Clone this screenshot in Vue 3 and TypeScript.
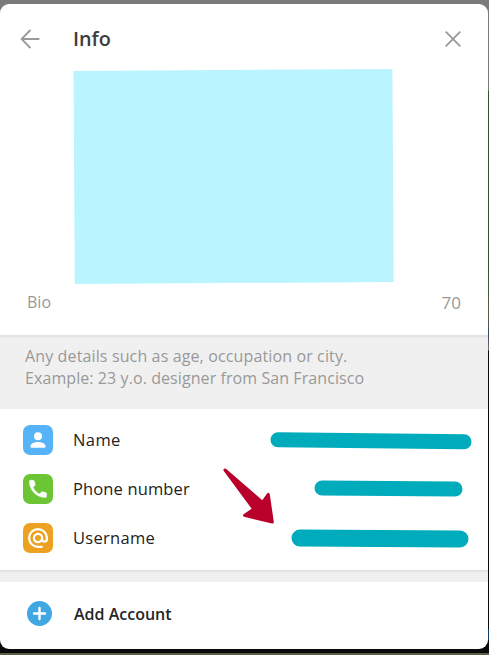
<script setup lang="ts">
interface Row {
  id: string
  label: string
  color: string
  bar: { x1: number; y1: number; x2: number; y2: number; w: number }
}

const rows: Row[] = [
  { id: 'name', label: 'Name', color: '#56b3f5', bar: { x1: 28, y1: 23.8, x2: 214, y2: 25.8, w: 15 } },
  { id: 'phone', label: 'Phone number', color: '#6cc534', bar: { x1: 72, y1: 23, x2: 205, y2: 24.1, w: 15 } },
  { id: 'username', label: 'Username', color: '#eda120', bar: { x1: 50, y1: 24, x2: 210, y2: 25, w: 17 } },
]
</script>

<template>
  <div class="backdrop">
    <div class="edge"></div>
    <main class="card">
      <header class="header">
        <svg class="back" width="20" height="20" viewBox="0 0 20 20">
          <path d="M10.4 1 L1.6 10 L10.4 19 M1.6 10 H19.4" />
        </svg>
        <h1 class="title">Info</h1>
        <svg class="close" width="16" height="16" viewBox="0 0 16 16">
          <path d="M0.7 0.7 L15.3 15.3 M15.3 0.7 L0.7 15.3" />
        </svg>
      </header>

      <svg class="photo" width="488" height="215" viewBox="0 0 488 215">
        <polygon points="73.5,2 392.4,0 393.7,213 74.8,215" />
      </svg>

      <div class="bio">
        <span class="bio-label">Bio</span>
        <span class="bio-count">70</span>
      </div>

      <div class="hint">
        <p class="hint-first">Any details such as age, occupation or city.</p>
        <p class="hint-second">Example: 23 y.o. designer from San Francisco</p>
      </div>

      <section class="rows">
        <div v-for="row in rows" :key="row.id" class="row">
          <svg class="icon" width="30" height="30" viewBox="0 0 30 30">
            <rect width="30" height="30" rx="7" :fill="row.color" />
            <g v-if="row.id === 'name'" fill="#fff">
              <circle cx="15" cy="11.2" r="4" />
              <path d="M7.5 21.2 C7.5 18 12 16.9 15 16.9 S22.5 18 22.5 21.2 Q22.5 22.7 21.2 22.7 H8.8 Q7.5 22.7 7.5 21.2 Z" />
            </g>
            <path
              v-else-if="row.id === 'phone'"
              fill="#fff"
              stroke="#fff"
              stroke-width="0.5"
              transform="translate(3 3)"
              d="M7 10.4 C8.4 13.3 10.7 15.6 13.6 17 L15.5 15 C15.8 14.7 16.2 14.6 16.6 14.8 L19.8 15.6 C20.3 15.8 20.6 16.2 20.6 16.7 V19.3 C20.6 20 20.1 20.4 19.4 20.4 C10.4 20.4 3.4 13 3.4 4.4 C3.4 3.7 3.8 3.3 4.5 3.3 H7.2 C7.8 3.3 8.2 3.6 8.3 4.1 L9.1 7.3 C9.2 7.7 9.1 8.1 8.8 8.4 Z"
            />
            <g v-else fill="none" stroke="#fff" stroke-width="2.2">
              <circle cx="15" cy="15" r="4.1" />
              <path d="M19.1 15 V16.3 C19.1 19.4 23.9 19.4 23.9 16.1 V15 A8.9 8.9 0 1 0 15 23.9 H19.6" />
            </g>
          </svg>
          <span class="label" :class="row.id">{{ row.label }}</span>
          <svg class="bar" width="238" height="49" viewBox="0 0 238 49">
            <line :x1="row.bar.x1" :y1="row.bar.y1" :x2="row.bar.x2" :y2="row.bar.y2" :stroke-width="row.bar.w" />
          </svg>
        </div>
        <svg class="pointer" width="54" height="58" viewBox="0 0 54 58">
          <path d="M4 3 L41.5 35.4 L47.3 27.4 L51.3 55 L23.5 48.4 L32.8 42 Z" />
        </svg>
      </section>

      <div class="gap"></div>

      <section class="add">
        <svg width="26" height="26" viewBox="0 0 26 26">
          <circle cx="13.5" cy="12.5" r="12.5" fill="#40a7e3" />
          <path d="M13.5 7 V18 M8 12.5 H19" stroke="#fff" stroke-width="2.4" stroke-linecap="round" />
        </svg>
        <span class="add-label">Add Account</span>
      </section>
    </main>
  </div>
</template>

<style>
body {
  margin: 0;
}
</style>

<style scoped>
.backdrop {
  position: relative;
  box-sizing: border-box;
  width: 489px;
  height: 655px;
  padding-top: 4px;
  overflow: hidden;
  background: linear-gradient(#7b7b7b 0 30px, #777 91px, #34502e 91px 270px, #59634b 315px, #3b4657 335px, #777 350px, #080a0b 351px 653px, #5c5e46 653px);
  font-family: "Open Sans", "Noto Sans", sans-serif;
  font-size: 16px;
}

.edge {
  position: absolute;
  right: 0;
  top: 629px;
  width: 1px;
  height: 11px;
  background: #123f63;
}

.card {
  position: relative;
  display: flex;
  flex-direction: column;
  width: 488px;
  height: 645px;
  overflow: hidden;
  border-radius: 9px;
  background: #fff;
}

.header {
  display: flex;
  flex: none;
  align-items: center;
  height: 65px;
  padding: 0 27px 0 20px;
  box-sizing: border-box;
}

.back,
.close {
  flex: none;
  margin-top: 5px;
  fill: none;
  stroke: #999;
  stroke-width: 1.8;
}

.title {
  flex: 1;
  margin: 5px 0 0 33px;
  color: #3c3c3c;
  font-size: 19.8px;
  font-weight: 600;
  line-height: 28px;
}

.photo {
  flex: none;
  fill: #b9f4ff;
}

.bio {
  display: flex;
  flex: none;
  justify-content: space-between;
  height: 51px;
  padding: 7px 27px 0;
  box-sizing: border-box;
  color: #999;
  line-height: 22px;
}

.bio-count {
  padding-top: 1px;
  font-size: 17px;
}

.hint {
  flex: none;
  height: 74px;
  padding: 10px 25px 0;
  box-sizing: border-box;
  background: linear-gradient(#e2e2e2 0 1px, #e8e8e8 2px, #f0f0f0 3px);
  color: #999;
  line-height: 22px;
}

.hint p {
  margin: 0;
  white-space: nowrap;
}

.hint-first {
  letter-spacing: 0.13px;
}

.hint-second {
  letter-spacing: 0.08px;
}

.rows {
  position: relative;
  flex: none;
  height: 161px;
  padding-top: 7px;
  box-sizing: border-box;
}

.row {
  display: flex;
  height: 49px;
  padding-left: 23px;
}

.icon {
  flex: none;
  margin-top: 9px;
}

.label {
  flex: 1;
  margin-left: 20px;
  padding-top: 13px;
  color: #222;
  font-size: 16.5px;
  line-height: 22px;
  letter-spacing: 0.13px;
}

.name {
  letter-spacing: 0.4px;
}

.username {
  letter-spacing: 0.3px;
}

.bar {
  flex: none;
  stroke: #00acbc;
  stroke-linecap: round;
}

.pointer {
  position: absolute;
  left: 221px;
  top: 58px;
  fill: #b9002b;
  stroke: #b9002b;
  stroke-width: 3;
  stroke-linejoin: round;
}

.gap {
  flex: none;
  height: 12px;
  background: linear-gradient(#e2e2e2 0 1px, #e8e8e8 2px, #f0f0f0 3px);
}

.add {
  display: flex;
  flex: 1;
  align-items: center;
  padding: 0 26px 3px;
}

.add-label {
  margin-left: 22px;
  color: #262626;
  font-weight: 600;
  line-height: 22px;
}
</style>
